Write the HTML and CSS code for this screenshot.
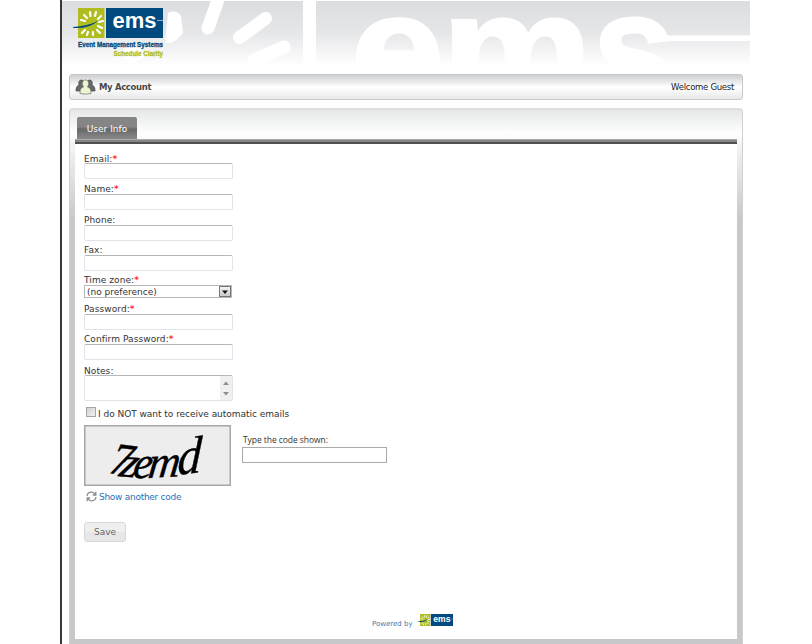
FILE: index.html
```html
<!DOCTYPE html>
<html lang="en">
<head>
<meta charset="utf-8">
<title>My Account</title>
<link rel="stylesheet" href="styles.css">
</head>
<body>
<svg class="defs" width="0" height="0" aria-hidden="true">
  <symbol id="mark" viewBox="0 0 90 30">
    <rect x="5" width="26.500" height="30" fill="#afbd21"/>
    <rect x="33" width="57" height="30" fill="#004a80"/>
    <g stroke="#fff" stroke-width="2.200" stroke-linecap="round">
      <path d="M17 4l.5 4M23 4l-1 4M28 8l-3 3M30 13l-4 1M29 20l-4-2M27 25l-3-3M20 27l0-3M14 27l1-3M9 25l3-3M11 7l3 3M8 12l4 1"/>
    </g>
    <path d="M0 19Q15 18 25 13Q16 21 0 20Z" fill="#004a80"/>
    <path d="M84 12.500h6" stroke="#8fb0c9" stroke-width="1"/>
    <text x="39.500" y="20" textLength="44" lengthAdjust="spacingAndGlyphs" font-family="Liberation Sans, sans-serif" font-weight="700" font-size="21.500" fill="#fff">ems</text>
  </symbol>
</svg>
<div class="page">
  <header class="banner">
    <svg class="watermark" width="688" height="74" viewBox="62 0 688 74" aria-hidden="true">
      <g fill="#fff">
        <path d="M168 13Q176 9 181 16L183 33Q175 44 165 43Z"/>
        <path d="M118 55L125 48H140L145 56Q136 63 132 65Z"/>
        <rect x="303" width="13" height="74"/>
        <path d="M649 41L660 35.500H750V41Z"/>
      </g>
      <g stroke="#fff" stroke-width="13" stroke-linecap="round">
        <path d="M219 -3L208 28M265.500 18.500L239.500 37.500M284 47L254 60"/>
      </g>
      <g fill="#fff" stroke="#fff" stroke-width="3" font-family="Liberation Sans, sans-serif" font-weight="700" font-size="154">
        <text x="351" y="102" textLength="93" lengthAdjust="spacingAndGlyphs">e</text>
        <text x="442" y="102" textLength="150" lengthAdjust="spacingAndGlyphs">m</text>
        <text x="593" y="102" textLength="82" lengthAdjust="spacingAndGlyphs">s</text>
      </g>
    </svg>
    <div class="brand">
      <svg width="90" height="30"><use href="#mark"/></svg>
      <svg class="tagline" width="90" height="20" viewBox="0 0 90 20">
        <g font-family="Liberation Sans, sans-serif" font-weight="700" font-size="7" stroke-width=".3">
          <text x="5" y="8.500" textLength="85" lengthAdjust="spacingAndGlyphs" fill="#004a80" stroke="#004a80">Event Management Systems</text>
          <text x="40.500" y="18" textLength="49.500" lengthAdjust="spacingAndGlyphs" fill="#afbd21" stroke="#afbd21">Schedule Clarity</text>
        </g>
      </svg>
    </div>
  </header>

  <nav class="bar">
    <svg width="21" height="16" viewBox="0 0 21 16">
      <g fill="#66696c" stroke="#444" stroke-width=".7">
        <path d="M1 12C1 8 2 7 4 6Q3 1 6.500 1Q9 1 9 4L8 12Z"/>
        <path d="M20 12C20 8 19 7 17 6Q18 1 14.500 1Q12 1 12 4L13 12Z"/>
      </g>
      <path d="M5 14.500C5 10 6 9 8.500 8C6 4 8 1 10.500 1S15 4 12.500 8C15 9 16 10 16 14.500Q10.500 16 5 14.500Z" fill="#eaf4cf" stroke="#777d70" stroke-width=".8"/>
    </svg>
    <b class="title">My Account</b>
    <span class="welcome">Welcome Guest</span>
  </nav>

  <main class="panel">
    <div class="tabs"><span class="tab">User Info</span></div>
    <div class="rule"></div>
    <form class="body">
      <label class="row"><span>Email:<i>*</i></span><input></label>
      <label class="row"><span>Name:<i>*</i></span><input></label>
      <label class="row mid"><span>Phone:</span><input></label>
      <label class="row mid"><span>Fax:</span><input></label>
      <label class="row zone"><span>Time zone:<i>*</i></span>
        <span class="select">(no preference)<span class="drop"><svg width="6" height="4"><path d="M0 .5h6L3 4Z" fill="#111"/></svg></span></span></label>
      <label class="row mid"><span>Password:<i>*</i></span><input></label>
      <label class="row"><span>Confirm Password:<i>*</i></span><input></label>
      <div class="row notes"><span>Notes:</span>
        <div class="area"><div class="scroll"><svg width="6" height="4"><path d="M0 4h6L3 .5Z"/></svg><svg width="6" height="4"><path d="M0 0h6L3 3.500Z"/></svg></div></div></div>
      <div class="check"><span class="box"></span><span class="checktext">I do NOT want to receive automatic emails</span></div>
      <div class="verify">
        <svg class="captcha" width="147" height="61" viewBox="0 0 147 61">
          <rect x=".75" y=".75" width="145.500" height="59.500" fill="#ededed" stroke="#a6a6a6" stroke-width="1.500"/>
          <g font-family="Liberation Serif, serif" font-style="italic" stroke="#000" stroke-width=".4">
            <text transform="translate(24 48) rotate(8) skewX(-6)" font-size="46" textLength="21" lengthAdjust="spacingAndGlyphs">7</text>
            <text transform="translate(34 51) rotate(5) skewX(-8)" font-size="43" textLength="18" lengthAdjust="spacingAndGlyphs">z</text>
            <text transform="translate(48 53) skewX(-8)" font-size="45" textLength="19" lengthAdjust="spacingAndGlyphs">e</text>
            <text transform="translate(63 53) rotate(-3) skewX(-10)" font-size="45" textLength="32" lengthAdjust="spacingAndGlyphs">m</text>
            <text transform="translate(93 50) rotate(-7) skewX(-10)" font-size="52" textLength="24" lengthAdjust="spacingAndGlyphs">d</text>
          </g>
        </svg>
        <label class="code"><span>Type the code shown:</span><input></label>
      </div>
      <a class="another"><svg width="11" height="11" viewBox="0 0 11 11" fill="none" stroke="#8c8c8c" stroke-width="1.300"><path d="M1 5Q1.500 1.200 5.500 1.200Q8 1.200 9.300 3.500M9.800 .8V4H6.800M10 6Q9.500 9.800 5.500 9.800Q3 9.800 1.700 7.500M1.200 10.200V7H4.200"/></svg><span>Show another code</span></a>
      <button type="button" class="save">Save</button>
      <footer class="powered"><span>Powered by</span><svg width="35" height="12" viewBox="0 0 90 30" preserveAspectRatio="none"><use href="#mark" width="90" height="30"/></svg></footer>
    </form>
  </main>
</div>
</body>
</html>
```
FILE: styles.css
```css
* { box-sizing: border-box; }
body {
  margin: 0;
  height: 644px;
  overflow: hidden;
  background: #fff;
  color: #333;
  font: 9px/10px "DejaVu Sans", sans-serif;
}
.defs { display: block; height: 0; }
.page {
  width: 690px;
  height: 644px;
  margin-left: 60px;
  border-left: 2px solid #36393b;
}
.banner {
  position: relative;
  height: 74px;
  background: linear-gradient(#fff 1px, #dcdde0 1px, #e5e6e8 32px, #fff 66px);
}
.watermark { position: absolute; inset: 0; }
.brand { position: relative; width: 90px; padding-top: 8px; margin-left: 11px; }
.brand svg { display: block; }
.bar {
  display: flex;
  align-items: center;
  width: 674px;
  height: 26px;
  margin-left: 7px;
  padding: 0 8px 0 5px;
  border: 1px solid #c7c9ca;
  border-radius: 3px;
  background: linear-gradient(#cecfd2, #fff 50%, #e7e9e8);
}
.title { margin-left: 3px; color: #484848; font-size: 8.500px; letter-spacing: -.35px; }
.welcome { margin-left: auto; color: #222; font-size: 8.500px; letter-spacing: -.28px; }
.panel {
  width: 674px;
  height: 537px;
  margin: 8px 0 0 7px;
  padding: 1px 5px 6px;
  border: 1px solid #cfd1d2;
  border-top: 2px solid #dcdedf;
  border-radius: 4px 4px 0 0;
  background: linear-gradient(#e6e8e8, #fff 24px, #f4f4f4 34px, #c7c8ca 110px);
}
.tabs { height: 28px; padding: 6px 0 0 2px; }
.rule { height: 5px; background: linear-gradient(#aaa 1px, #858585 1px 3px, #505050 3px); }
.tab {
  display: block;
  width: 60px;
  height: 22px;
  padding-top: 7px;
  border-radius: 2px 2px 0 0;
  background: linear-gradient(#858585 0 45%, #686868 55%, #8a8a8a);
  color: #fff;
  text-align: center;
}
.body { height: 495px; padding: 9px 0 0 9px; background: #fff; }
.row { display: block; height: 31px; }
.row > span:first-child { display: block; height: 10px; line-height: 10px; letter-spacing: .08px; }
.row:first-child > span:first-child, .notes > span:first-child { line-height: 12px; }
.row.mid { height: 30px; }
.row.zone { height: 29px; }
.row i { color: #f33; font-style: normal; font-weight: 700; letter-spacing: 0; }
.row input {
  display: block;
  width: 149px;
  height: 16px;
  margin: 0;
  border: 1px solid #e2e3ea;
  border-top-color: #b5b6ba;
  border-radius: 2px;
}
.select {
  display: flex;
  justify-content: space-between;
  width: 148px;
  height: 13px;
  padding-left: 2px;
  border: 1px solid #b7b7b7;
  line-height: 13px;
}
.drop {
  display: grid;
  place-items: center;
  width: 12px;
  height: 11px;
  border: 1px solid #777;
  background: linear-gradient(#f4f4f4, #ccc);
}
.notes { height: 36px; }
.area {
  display: flex;
  justify-content: flex-end;
  width: 149px;
  height: 26px;
  border: 1px solid #e2e3ea;
  border-top-color: #b5b6ba;
  border-radius: 2px;
}
.scroll {
  display: flex;
  flex-direction: column;
  justify-content: space-between;
  align-items: center;
  width: 12px;
  padding: 5px 0 4px;
  background: #f0f0f0;
  fill: #909090;
}
.check { display: flex; align-items: center; height: 24px; padding-left: 2px; }
.checktext { padding-top: 1px; letter-spacing: -.03px; }
.box {
  width: 10px;
  height: 10px;
  margin: -2px 2px 0 0;
  border: 1px solid #a5a5a5;
  background: linear-gradient(135deg, #cfd1d4, #f2f2f2);
}
.verify { display: flex; height: 61px; }
.code { margin: 10px 0 0 11px; font: 8.500px/10px "Open Sans", sans-serif; }
.code span { padding-left: 1px; letter-spacing: -.06px; }
.code input {
  display: block;
  width: 145px;
  height: 16px;
  margin: 2px 0 0;
  border: 1px solid #aaa;
}
.another { display: flex; gap: 2px; height: 36px; padding: 5px 0 0 2px; color: #2a70b5; line-height: 12px; letter-spacing: -.28px; }
.save {
  display: block;
  width: 42px;
  height: 20px;
  padding: 0;
  border: 1px solid #d8d8d8;
  border-radius: 3px;
  background: linear-gradient(#efefef 50%, #e7e7e7 50%);
  color: #666;
  font: inherit;
}
.powered { display: flex; align-items: flex-end; margin: 72px 0 0 288px; color: #4778ad; font-size: 7px; }
.powered svg { margin: 0 0 3px 5px; }
```
